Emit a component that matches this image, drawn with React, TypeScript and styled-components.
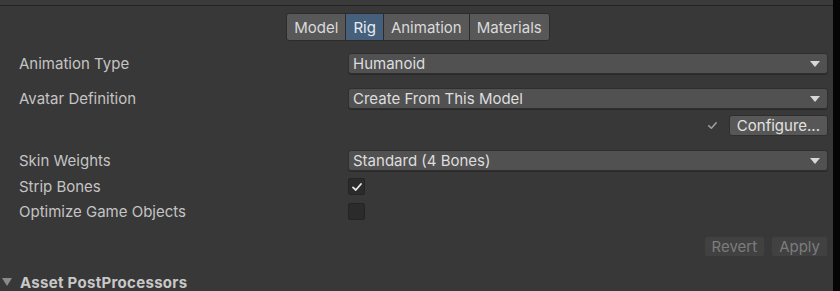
import React from 'react';
import styled, { createGlobalStyle } from 'styled-components';

const GlobalStyle = createGlobalStyle`
	html, body {
		margin: 0;
		padding: 0;
		background: #383838;
	}
	* {
		box-sizing: border-box;
	}
`;

const tabs = ['Model', 'Rig', 'Animation', 'Materials'];

const Check = ({ size = 12, color = '#e8e8e8' }: { size?: number; color?: string }) => (
	<svg width={size} height={size} viewBox='0 0 12 12'>
		<path d='M2 6.4 L4.8 9 L10 3' fill='none' stroke={color} strokeWidth='1.8' strokeLinecap='round' strokeLinejoin='round' />
	</svg>
);

const Arrow = () => (
	<svg width='10' height='6' viewBox='0 0 10 6'>
		<path d='M0 0 H10 L5 6 Z' fill='#d8d8d8' />
	</svg>
);

const Dropdown = ({ value }: { value: string }) => (
	<Select>
		<span>{value}</span>
		<Arrow />
	</Select>
);

const App = () => {
	return (
		<Page>
			<GlobalStyle />
			<Panel>
				<TopBar />
				<TabBar>
					{tabs.map((t) => (
						<Tab key={t} $active={t === 'Rig'}>
							{t}
						</Tab>
					))}
				</TabBar>
				<Form>
					<Row $mt={12} $h={20}>
						<Label>Animation Type</Label>
						<Dropdown value='Humanoid' />
					</Row>
					<Row $mt={15} $h={21}>
						<Label>Avatar Definition</Label>
						<Dropdown value='Create From This Model' />
					</Row>
					<ActionRow $mt={6}>
						<Check size={11} color='#9a9a9a' />
						<Button>Configure...</Button>
					</ActionRow>
					<Row $mt={14} $h={20}>
						<Label>Skin Weights</Label>
						<Dropdown value='Standard (4 Bones)' />
					</Row>
					<Row $mt={7} $h={17}>
						<Label>Strip Bones</Label>
						<Box>
							<Check />
						</Box>
					</Row>
					<Row $mt={8} $h={17}>
						<Label>Optimize Game Objects</Label>
						<Box />
					</Row>
					<ActionRow $mt={17}>
						<Button $disabled>Revert</Button>
						<Button $disabled>Apply</Button>
					</ActionRow>
				</Form>
				<Foldout>
					<FoldArrow />
					Asset PostProcessors
				</Foldout>
			</Panel>
			<Edge />
		</Page>
	);
};

const Page = styled.div`
	width: 840px;
	height: 291px;
	display: flex;
	overflow: hidden;
	font-family: Inter, 'Noto Sans', sans-serif;
	font-size: 15px;
	color: #c4c4c4;
`;

const Panel = styled.div`
	flex: 1;
	background: #383838;
	display: flex;
	flex-direction: column;
`;

const Edge = styled.div`
	width: 7px;
	background: #050505;
`;

const TopBar = styled.div`
	height: 6px;
	background: #3a3a3a;
	border-bottom: 1px solid #232323;
`;

const TabBar = styled.div`
	margin-top: 7px;
	display: flex;
	justify-content: center;
	padding-left: 4px;
`;

const Tab = styled.div<{ $active?: boolean }>`
	height: 28px;
	padding: 0 7px;
	display: flex;
	align-items: center;
	color: ${(p) => (p.$active ? '#e6ecf2' : '#dadada')};
	background: ${(p) => (p.$active ? '#46607c' : '#585858')};
	border: 1px solid #2c2c2c;
	margin-left: -1px;
	&:first-child {
		border-radius: 3px 0 0 3px;
	}
	&:last-child {
		border-radius: 0 3px 3px 0;
	}
`;

const Form = styled.div`
	display: flex;
	flex-direction: column;
	padding: 0 5px 0 19px;
`;

const Row = styled.div<{ $mt: number; $h: number }>`
	margin-top: ${(p) => p.$mt}px;
	height: ${(p) => p.$h}px;
	display: grid;
	grid-template-columns: 329px 1fr;
	align-items: center;
`;

const Label = styled.div`
	color: #c4c4c4;
	white-space: nowrap;
`;

const Select = styled.div`
	height: 100%;
	padding: 0 7px 0 4px;
	display: flex;
	align-items: center;
	justify-content: space-between;
	color: #dedede;
	background: #515151;
	border: 1px solid #2f2f2f;
	border-radius: 3px;
	box-shadow: 0 1px 0 #2a2a2a;
`;

const ActionRow = styled.div<{ $mt: number }>`
	margin-top: ${(p) => p.$mt}px;
	height: 21px;
	display: flex;
	justify-content: flex-end;
	align-items: center;
	gap: 6px;
	& > svg {
		margin-right: 5px;
	}
`;

const Button = styled.div<{ $disabled?: boolean }>`
	height: 21px;
	padding: 0 7px;
	display: flex;
	align-items: center;
	color: ${(p) => (p.$disabled ? '#7c7c7c' : '#e2e2e2')};
	background: ${(p) => (p.$disabled ? '#414141' : '#575757')};
	border: 1px solid ${(p) => (p.$disabled ? '#393939' : '#2f2f2f')};
	border-radius: 3px;
`;

const Box = styled.div`
	width: 17px;
	height: 17px;
	display: flex;
	align-items: center;
	justify-content: center;
	background: #2b2b2b;
	border: 1px solid #242424;
	border-radius: 2px;
`;

const Foldout = styled.div`
	margin-top: auto;
	height: 18px;
	padding-left: 2px;
	display: flex;
	align-items: center;
	gap: 8px;
	font-weight: 700;
	letter-spacing: 0.3px;
	color: #c8c8c8;
`;

const FoldArrow = styled.span`
	width: 0;
	height: 0;
	border-left: 5px solid transparent;
	border-right: 5px solid transparent;
	border-top: 8px solid #8a8a8a;
`;

export default App;
